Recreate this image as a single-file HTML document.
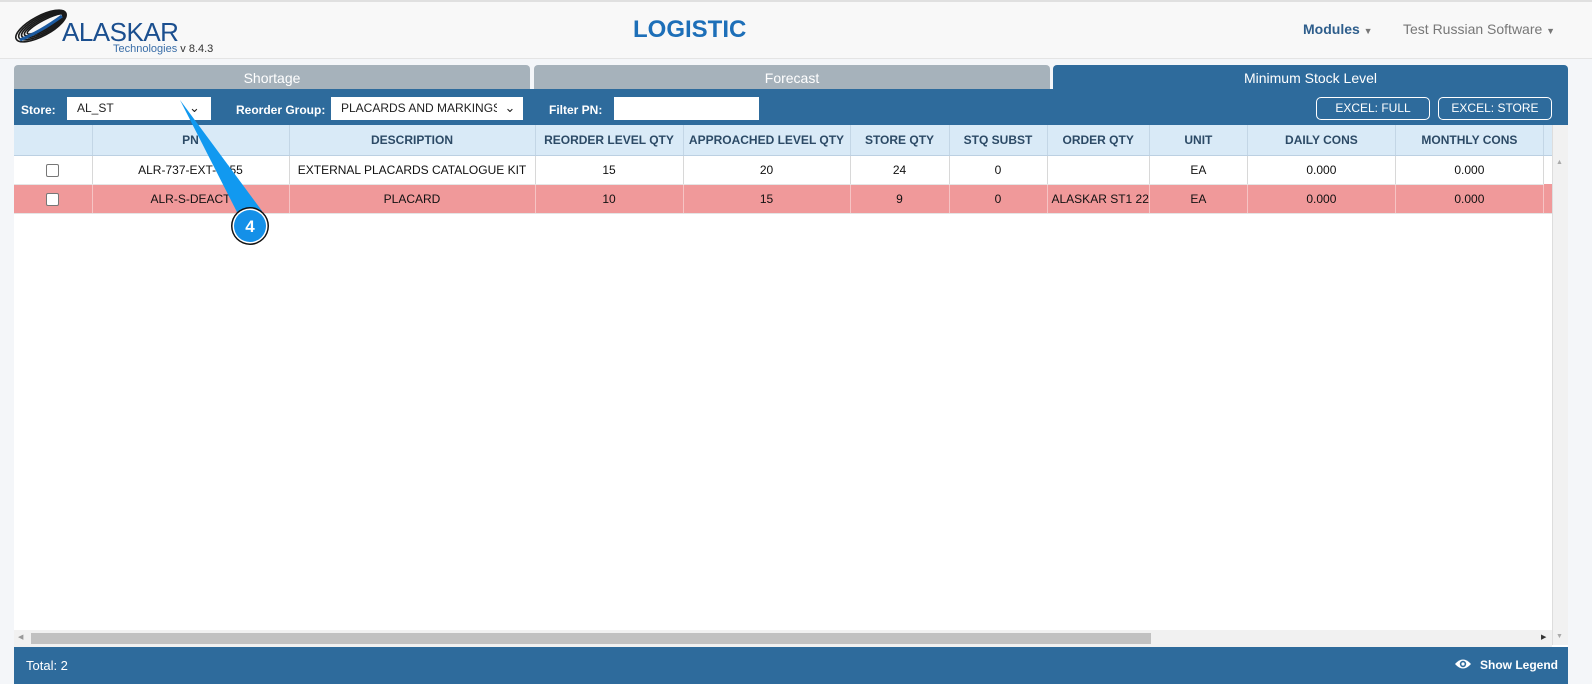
<!DOCTYPE html>
<html><head><meta charset="utf-8"><style>
*{box-sizing:border-box;margin:0;padding:0}
body{width:1592px;height:684px;overflow:hidden;background:#f4f6f9;font-family:"Liberation Sans",Arial,sans-serif;position:relative}
.hdr{position:absolute;left:0;top:0;width:1592px;height:59px;background:#f8f8f8;border-top:2px solid #e0e0e0;border-bottom:1px solid #e4e4e4}
.abs{position:absolute}
.tab{position:absolute;top:65px;height:25px;border-radius:4px 4px 0 0;color:#fff;font-size:14px;text-align:center;line-height:26px}
.bar{position:absolute;left:14px;top:89px;width:1554px;height:36px;background:#2e6b9c}
.lbl{position:absolute;color:#fff;font-weight:bold;font-size:12px;top:103px}
.sel{position:absolute;top:97px;height:23px;background:#fff;font-size:12px;line-height:23px;padding-left:10px;color:#222;overflow:hidden;white-space:nowrap}
.btn{position:absolute;top:97px;height:23px;border:1px solid #fff;border-radius:5px;color:#fff;font-size:12px;text-align:center;line-height:21px}
.grid{position:absolute;left:14px;top:125px;width:1554px;height:522px;background:#fff}
table{border-collapse:collapse;position:absolute;left:0;top:0;font-size:12px}
td{height:29px;text-align:center;border-right:1px solid #d8d8d8;border-bottom:1px solid #e5e5e5;color:#111;white-space:nowrap;overflow:hidden}
tr.h td{height:30px;background:#d9eaf7;color:#2c4a66;font-weight:bold;border-right:1px solid #c3d6e6;border-bottom:1px solid #bcd0e2}
tr.p td{background:#f0999a;border-right:1px solid #f6c4c4}
.cb{display:inline-block;width:13px;height:13px;border:1px solid #777;border-radius:2px;background:#fff;vertical-align:middle}
.foot{position:absolute;left:14px;top:647px;width:1554px;height:37px;background:#2e6b9c;color:#fff}
</style></head><body>
<div class="hdr">
 <svg class="abs" style="left:12px;top:6px" width="60" height="36" viewBox="0 0 60 36">
  <g fill="none" stroke="#1a1a1a" stroke-width="1.6">
   <ellipse cx="29" cy="18" rx="28" ry="10" transform="rotate(-28 29 18)"/>
   <ellipse cx="30" cy="17.5" rx="26" ry="8.5" transform="rotate(-28 30 17.5)"/>
   <ellipse cx="31" cy="17" rx="24" ry="7" transform="rotate(-28 31 17)"/>
   <ellipse cx="32" cy="16.5" rx="22" ry="5.5" transform="rotate(-28 32 16.5)"/>
   <ellipse cx="33" cy="16" rx="20" ry="4" transform="rotate(-28 33 16)"/>
  </g>
  <path d="M8 32 Q28 24 50 8" stroke="#1b5aa0" stroke-width="3" fill="none"/>
 </svg>
 <div class="abs" style="left:62px;top:15px;font-size:26px;color:#1b4f8f;letter-spacing:-0.5px">ALASKAR</div>
 <div class="abs" style="left:113px;top:41px;font-size:11px;color:#3a6ea8">Technologies <span style="color:#333;font-size:11px">v 8.4.3</span></div>
 <div class="abs" style="left:633px;top:14px;font-size:24px;font-weight:bold;color:#1d6fb8">LOGISTIC</div>
 <div class="abs" style="left:1303px;top:19px;font-size:14px;font-weight:bold;color:#2e5e8c">Modules <span style="font-size:9px;color:#777">▼</span></div>
 <div class="abs" style="left:1403px;top:19px;font-size:14px;color:#777">Test Russian Software <span style="font-size:9px">▼</span></div>
</div>
<div class="tab" style="left:14px;width:516px;background:#a6b2bb">Shortage</div>
<div class="tab" style="left:534px;width:516px;background:#a6b2bb">Forecast</div>
<div class="tab" style="left:1053px;width:515px;background:#2e6b9c">Minimum Stock Level</div>
<div class="bar"></div>
<div class="lbl" style="left:21px">Store:</div>
<div class="sel" style="left:67px;width:144px">AL_ST<span style="position:absolute;left:122px;top:-1px;font-size:13px">&#8964;</span></div>
<div class="lbl" style="left:236px">Reorder Group:</div>
<div class="sel" style="left:331px;width:192px">PLACARDS AND MARKINGS<span style="position:absolute;left:166px;top:-1px;width:26px;height:24px;font-size:13px;background:#fff;text-align:center">&#8964;</span></div>
<div class="lbl" style="left:549px">Filter PN:</div>
<div class="sel" style="left:614px;width:145px"></div>
<div class="btn" style="left:1316px;width:114px">EXCEL: FULL</div>
<div class="btn" style="left:1438px;width:114px">EXCEL: STORE</div>
<div class="grid">
<table>
<tr class="h"><td style="width:78px"></td><td style="width:197px">PN</td><td style="width:246px">DESCRIPTION</td><td style="width:148px">REORDER LEVEL QTY</td><td style="width:167px">APPROACHED LEVEL QTY</td><td style="width:99px">STORE QTY</td><td style="width:98px">STQ SUBST</td><td style="width:99px">ORDER QTY</td><td style="width:98px">UNIT</td><td style="width:148px">DAILY CONS</td><td style="width:148px">MONTHLY CONS</td><td style="width:12px"></td></tr>
<tr><td><span class="cb"></span></td><td>ALR-737-EXT-0555</td><td>EXTERNAL PLACARDS CATALOGUE KIT</td><td>15</td><td>20</td><td>24</td><td>0</td><td></td><td>EA</td><td>0.000</td><td>0.000</td><td style="border:none"></td></tr>
<tr class="p"><td><span class="cb"></span></td><td>ALR-S-DEACT</td><td>PLACARD</td><td>10</td><td>15</td><td>9</td><td>0</td><td style="text-align:left;padding-left:4px">ALASKAR ST1 22</td><td>EA</td><td>0.000</td><td>0.000</td><td></td></tr>
</table>
<div class="abs" style="left:1538px;top:0;width:16px;height:520px;background:#f1f1f1;border-left:1px solid #ddd"></div>
<div class="abs" style="left:1542px;top:34px;font-size:7px;color:#aaa">▲</div>
<div class="abs" style="left:1542px;top:508px;font-size:7px;color:#aaa">▼</div>
<div class="abs" style="left:0;top:505px;width:1538px;height:17px;background:#f1f1f1"></div>
<div class="abs" style="left:17px;top:508px;width:1120px;height:11px;background:#c1c1c1"></div>
<div class="abs" style="left:4px;top:508px;font-size:7px;color:#999">◀</div>
<div class="abs" style="left:1527px;top:508px;font-size:7px;color:#333">▶</div>
</div>
<div class="foot">
 <div class="abs" style="left:12px;top:11px;font-size:13px">Total: 2</div>
 <svg class="abs" style="left:1440px;top:11px" width="18" height="12" viewBox="0 0 18 12"><path d="M1 6 Q9 -3 17 6 Q9 15 1 6Z" fill="#fff"/><circle cx="9" cy="6" r="3.2" fill="#2e6b9c"/><circle cx="9" cy="6" r="1.6" fill="#fff"/></svg>
 <div class="abs" style="left:1466px;top:11px;font-size:12px;font-weight:bold">Show Legend</div>
</div>
<svg class="abs" style="left:170px;top:95px" width="110" height="150" viewBox="170 95 110 150">
 <path d="M180 100 L262 211 L240 218 Z" fill="#1199f0"/>
 <circle cx="250" cy="226" r="19" fill="#111"/>
 <circle cx="250" cy="226" r="17.5" fill="#fff"/>
 <circle cx="250" cy="226" r="16" fill="#1490e8"/>
 <text x="250" y="232" text-anchor="middle" font-family="Liberation Sans" font-weight="bold" font-size="17" fill="#fff">4</text>
</svg>
</body></html>
